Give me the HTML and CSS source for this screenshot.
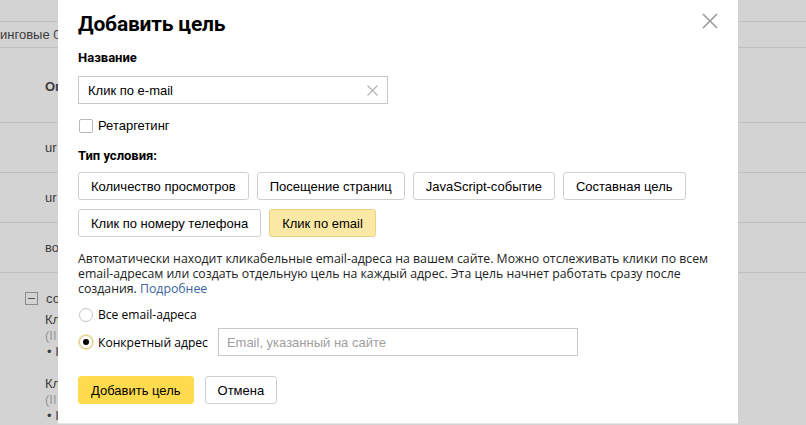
FILE: index.html
```html
<!DOCTYPE html>
<html lang="ru">
<head>
<meta charset="utf-8">
<link rel="stylesheet" href="styles.css">
</head>
<body>
<div class="page">
  <div class="tabs"><span>инговые 0</span></div>
  <div class="row head"><span>Ог</span></div>
  <div class="row"><span>ur</span></div>
  <div class="row"><span>ur</span></div>
  <div class="row"><span>во</span></div>
  <div class="tree">
    <div class="node"><span class="minus"></span><span>со</span></div>
    <div class="leaf">
      <div class="l1">Кл</div>
      <div class="l2">(II</div>
      <div class="l3">• I</div>
    </div>
    <div class="leaf">
      <div class="l1">Кл</div>
      <div class="l2">(II</div>
      <div class="l3">• I</div>
    </div>
  </div>
</div>

<div class="modal">
  <svg class="close" width="16" height="16" viewBox="0 0 16 16"><path d="M1 1L15 15M15 1L1 15" stroke="#9a9a9a" stroke-width="1.6" fill="none"/></svg>
  <h1 class="title">Добавить цель</h1>
  <div class="label">Название</div>
  <div class="input name">
    <span>Клик по e-mail</span>
    <svg width="11" height="11" viewBox="0 0 11 11"><path d="M0.5 0.5L10.5 10.5M10.5 0.5L0.5 10.5" stroke="#b3b3b3" stroke-width="1.1" fill="none"/></svg>
  </div>
  <label class="check"><span class="box"></span>Ретаргетинг</label>
  <div class="label type">Тип условия:</div>
  <div class="choices">
    <span class="btn">Количество просмотров</span>
    <span class="btn">Посещение страниц</span>
    <span class="btn">JavaScript-событие</span>
    <span class="btn">Составная цель</span>
    <span class="btn">Клик по номеру телефона</span>
    <span class="btn active">Клик по email</span>
  </div>
  <p class="desc">Автоматически находит кликабельные email-адреса на вашем сайте. Можно отслеживать клики по всем email-адресам или создать отдельную цель на каждый адрес. Эта цель начнет работать сразу после создания. <a href="#">Подробнее</a></p>
  <div class="radio"><span class="circle"></span>Все email-адреса</div>
  <div class="radio sel"><span class="circle on"></span>Конкретный адрес<div class="input email">Email, указанный на сайте</div></div>
  <div class="actions">
    <span class="btn primary">Добавить цель</span>
    <span class="btn">Отмена</span>
  </div>
</div>
</body>
</html>
```
FILE: styles.css
```css
html, body { margin: 0; padding: 0; }
body {
  width: 806px; height: 425px; overflow: hidden; position: relative;
  background: #d3d3d3;
  font-family: "Liberation Sans", Arial, sans-serif;
  font-size: 13px; color: #000;
}
.page { color: #3c3c3c; }
.tabs { margin-top: 21px; height: 27px; box-sizing: border-box; border-top: 1px solid #bfbfbf; border-bottom: 1px solid #bfbfbf; display: flex; align-items: center; }
.row { height: 49px; border-bottom: 1px solid #bfbfbf; display: flex; align-items: center; padding-left: 45px; }
.row.head { height: 75px; font-weight: bold; padding-top: 2px; box-sizing: border-box; }
.tree { padding-left: 25px; padding-top: 18px; }
.node { display: flex; align-items: center; gap: 8px; }
.minus { width: 11px; height: 11px; border: 1px solid #8a8a8a; position: relative; }
.minus::after { content: ""; position: absolute; left: 2px; right: 2px; top: 5px; height: 1px; background: #555; }
.leaf { padding-left: 20px; padding-top: 6px; line-height: 16px; }
.leaf .l2 { color: #999; }
.leaf .l3 { padding-left: 2px; }
.leaf + .leaf { padding-top: 16px; }

.modal {
  position: absolute; left: 58px; top: 0; width: 680px; height: 424px;
  background: #fff; box-sizing: border-box; padding: 9px 20px 0;
  border-bottom: 1px solid #e6e6e6;
}
.close { position: absolute; left: 644px; top: 13px; }
.title { margin: 0; font-size: 21px; line-height: 30px; font-weight: bold; font-family: Roboto, sans-serif; letter-spacing: -0.2px; }
.label { font-weight: bold; font-size: 13px; margin-top: 11px; line-height: 16px; font-family: Roboto, sans-serif; }
.input { border: 1px solid #c8c8c8; box-sizing: border-box; height: 28px; display: flex; align-items: center; padding: 0 9px; }
.name { width: 310px; margin-top: 10px; justify-content: space-between; }
.check { display: flex; align-items: center; gap: 5px; margin-top: 14px; line-height: 16px; }
.box { width: 12px; height: 12px; border: 1px solid #b8b8b8; border-radius: 2px; margin-left: 1px; }
.label.type { margin-top: 14px; }
.choices { display: flex; flex-wrap: wrap; gap: 9px 8px; margin-top: 8px; width: 620px; }
.btn { display: inline-flex; align-items: center; height: 28px; box-sizing: border-box; border: 1px solid #cfcfcf; border-radius: 3px; padding: 0 12px; background: #fff; }
.btn.active { background: #fbe8a4; border-color: #e8d283; }
.desc { margin: 14px 0 0; font-family: "Open Sans", sans-serif; font-size: 12.3px; line-height: 15px; color: #222; width: 640px; }
.desc a { color: #3a64a0; text-decoration: none; }
.radio { display: flex; align-items: center; gap: 5px; margin-top: 10px; font-family: "Open Sans", sans-serif; font-size: 12.1px; }
.circle { width: 12px; height: 12px; border: 1px solid #c4c4c4; border-radius: 50%; margin-left: 1px; box-sizing: content-box; position: relative; }
.circle.on { border-color: #d9c57e; box-shadow: 0 0 0 1px #f1e3b3; }
.circle.on::after { content: ""; position: absolute; left: 3px; top: 3px; width: 6px; height: 6px; border-radius: 50%; background: #000; }
.radio.sel { margin-top: 5px; }
.email { width: 360px; margin-left: 5px; color: #a0a0a0; font-family: "Liberation Sans", Arial, sans-serif; font-size: 13px; padding-left: 8px; }
.actions { display: flex; gap: 11px; margin-top: 20px; }
.btn.primary { background: #ffdb4d; border-color: #ffdb4d; }
```
